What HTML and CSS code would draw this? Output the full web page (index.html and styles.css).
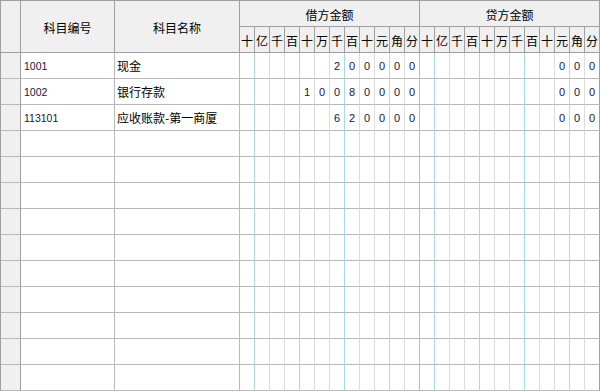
FILE: index.html
```html
<!DOCTYPE html>
<html lang="zh-CN">
<head>
<meta charset="utf-8">
<title>凭证分录</title>
<link rel="stylesheet" href="styles.css">
</head>
<body>
<div class="sheet">
  <div class="head">
    <div class="span2"></div>
    <div class="span2">科目编号</div>
    <div class="span2">科目名称</div>
    <div class="span12">借方金额</div>
    <div class="span12">贷方金额</div>
    <div>十</div><div>亿</div><div>千</div><div>百</div><div>十</div><div>万</div><div>千</div><div>百</div><div>十</div><div>元</div><div>角</div><div>分</div>
    <div>十</div><div>亿</div><div>千</div><div>百</div><div>十</div><div>万</div><div>千</div><div>百</div><div>十</div><div>元</div><div>角</div><div>分</div>
  </div>
  <div class="row"><i class="rh"></i><i class="code">1001</i><i class="name">现金</i><i></i><i></i><i></i><i></i><i></i><i></i><i>2</i><i>0</i><i>0</i><i>0</i><i>0</i><i>0</i><i></i><i></i><i></i><i></i><i></i><i></i><i></i><i></i><i></i><i>0</i><i>0</i><i>0</i></div>
  <div class="row"><i class="rh"></i><i class="code">1002</i><i class="name">银行存款</i><i></i><i></i><i></i><i></i><i>1</i><i>0</i><i>0</i><i>8</i><i>0</i><i>0</i><i>0</i><i>0</i><i></i><i></i><i></i><i></i><i></i><i></i><i></i><i></i><i></i><i>0</i><i>0</i><i>0</i></div>
  <div class="row"><i class="rh"></i><i class="code">113101</i><i class="name">应收账款-第一商厦</i><i></i><i></i><i></i><i></i><i></i><i></i><i>6</i><i>2</i><i>0</i><i>0</i><i>0</i><i>0</i><i></i><i></i><i></i><i></i><i></i><i></i><i></i><i></i><i></i><i>0</i><i>0</i><i>0</i></div>
  <div class="row"><i class="rh"></i><i class="code"></i><i class="name"></i><i></i><i></i><i></i><i></i><i></i><i></i><i></i><i></i><i></i><i></i><i></i><i></i><i></i><i></i><i></i><i></i><i></i><i></i><i></i><i></i><i></i><i></i><i></i><i></i></div>
  <div class="row"><i class="rh"></i><i class="code"></i><i class="name"></i><i></i><i></i><i></i><i></i><i></i><i></i><i></i><i></i><i></i><i></i><i></i><i></i><i></i><i></i><i></i><i></i><i></i><i></i><i></i><i></i><i></i><i></i><i></i><i></i></div>
  <div class="row"><i class="rh"></i><i class="code"></i><i class="name"></i><i></i><i></i><i></i><i></i><i></i><i></i><i></i><i></i><i></i><i></i><i></i><i></i><i></i><i></i><i></i><i></i><i></i><i></i><i></i><i></i><i></i><i></i><i></i><i></i></div>
  <div class="row"><i class="rh"></i><i class="code"></i><i class="name"></i><i></i><i></i><i></i><i></i><i></i><i></i><i></i><i></i><i></i><i></i><i></i><i></i><i></i><i></i><i></i><i></i><i></i><i></i><i></i><i></i><i></i><i></i><i></i><i></i></div>
  <div class="row"><i class="rh"></i><i class="code"></i><i class="name"></i><i></i><i></i><i></i><i></i><i></i><i></i><i></i><i></i><i></i><i></i><i></i><i></i><i></i><i></i><i></i><i></i><i></i><i></i><i></i><i></i><i></i><i></i><i></i><i></i></div>
  <div class="row"><i class="rh"></i><i class="code"></i><i class="name"></i><i></i><i></i><i></i><i></i><i></i><i></i><i></i><i></i><i></i><i></i><i></i><i></i><i></i><i></i><i></i><i></i><i></i><i></i><i></i><i></i><i></i><i></i><i></i><i></i></div>
  <div class="row"><i class="rh"></i><i class="code"></i><i class="name"></i><i></i><i></i><i></i><i></i><i></i><i></i><i></i><i></i><i></i><i></i><i></i><i></i><i></i><i></i><i></i><i></i><i></i><i></i><i></i><i></i><i></i><i></i><i></i><i></i></div>
  <div class="row"><i class="rh"></i><i class="code"></i><i class="name"></i><i></i><i></i><i></i><i></i><i></i><i></i><i></i><i></i><i></i><i></i><i></i><i></i><i></i><i></i><i></i><i></i><i></i><i></i><i></i><i></i><i></i><i></i><i></i><i></i></div>
  <div class="row"><i class="rh"></i><i class="code"></i><i class="name"></i><i></i><i></i><i></i><i></i><i></i><i></i><i></i><i></i><i></i><i></i><i></i><i></i><i></i><i></i><i></i><i></i><i></i><i></i><i></i><i></i><i></i><i></i><i></i><i></i></div>
  <div class="row"><i class="rh"></i><i class="code"></i><i class="name"></i><i></i><i></i><i></i><i></i><i></i><i></i><i></i><i></i><i></i><i></i><i></i><i></i><i></i><i></i><i></i><i></i><i></i><i></i><i></i><i></i><i></i><i></i><i></i><i></i></div>
  <div class="row"><i class="rh"></i><i class="code"></i><i class="name"></i><i></i><i></i><i></i><i></i><i></i><i></i><i></i><i></i><i></i><i></i><i></i><i></i><i></i><i></i><i></i><i></i><i></i><i></i><i></i><i></i><i></i><i></i><i></i><i></i></div>
</div>
</body>
</html>
```

FILE: styles.css
```css
* { box-sizing: border-box; margin: 0; padding: 0; }
html, body { margin: 0; background: #fff; }
body {
  font-family: "Liberation Sans", "Noto Sans CJK SC", sans-serif;
  color: #000;
}
.sheet {
  width: 600px;
  border-left: 1px solid #a0a0a0;
  border-top: 1px solid #a0a0a0;
}
.head, .row {
  display: grid;
  grid-template-columns: 20px 94px 125px repeat(24, 15px);
}
.head {
  grid-template-rows: 26px 26px;
  background: #f0f0f0;
}
.head > div {
  border-right: 1px solid #a0a0a0;
  border-bottom: 1px solid #a0a0a0;
  display: flex;
  align-items: center;
  justify-content: center;
  padding-top: 2px;
  font-family: "Noto Sans CJK SC", sans-serif;
  font-size: 12px;
  line-height: 1;
  color: #000;
}
.span2 { grid-row: span 2; }
.span12 { grid-column: span 12; }

.row { height: 26px; }
.row > i {
  font-style: normal;
  border-right: 1px solid #dcdcdc;
  border-bottom: 1px solid #b9b9b9;
  display: flex;
  align-items: center;
  justify-content: center;
  font-size: 11px;
  line-height: 1;
  color: #16163c;
  padding-top: 1px;
}
.row:last-child > i { border-bottom-color: #a0a0a0; }
.row > .rh {
  background: #f0f0f0;
  border-right-color: #a0a0a0;
}
.row > .code, .row > .name {
  justify-content: flex-start;
  border-right-color: #b9b9b9;
}
.row > .code {
  padding-left: 3px;
  font-size: 10.5px;
}
.row > .name {
  padding-left: 2px;
  font-family: "Noto Sans CJK SC", sans-serif;
  font-size: 12px;
  color: #000;
}
.row > i:nth-child(4),
.row > i:nth-child(7),
.row > i:nth-child(10),
.row > i:nth-child(16),
.row > i:nth-child(19),
.row > i:nth-child(22) { border-right-color: #a6d9e3; }
.row > i:nth-child(13),
.row > i:nth-child(25) { border-right-color: #f6c0c8; }
.row > i:nth-child(15) { border-right-color: #b9b9b9; }
.row > i:nth-child(27) { border-right-color: #a0a0a0; }
```
